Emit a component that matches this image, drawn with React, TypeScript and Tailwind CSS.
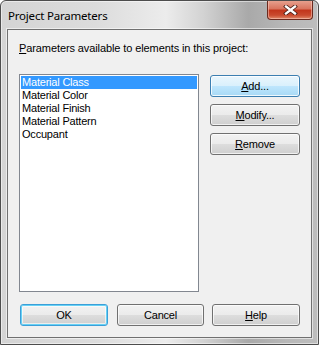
import React from "react";

const body = "font-['Liberation_Sans',Arial,sans-serif] text-[11px] tracking-[-0.2px] text-black";

function Btn({ children, w, variant = "normal" }: { children: React.ReactNode; w: string; variant?: "normal" | "hover" | "default" }) {
  const base = "h-[22px] flex items-center justify-center rounded-[3px] border " + body + " " + w;
  if (variant === "hover") {
    return (
      <div className={base + " border-[#3c7fb1] bg-[linear-gradient(to_bottom,#eaf6fd_0%,#d9f0fc_50%,#bee6fd_51%,#a7d9f5_100%)] shadow-[inset_0_0_0_1px_rgba(255,255,255,0.8)]"}>
        {children}
      </div>
    );
  }
  if (variant === "default") {
    return (
      <div className={base + " border-[#3c9fd8] bg-[linear-gradient(to_bottom,#f2f2f2_0%,#ebebeb_50%,#dddddd_51%,#cfcfcf_100%)] shadow-[inset_0_0_0_1px_#67d1f5,inset_0_0_0_2px_rgba(255,255,255,0.6)]"}>
        {children}
      </div>
    );
  }
  return (
    <div className={base + " border-[#707070] bg-[linear-gradient(to_bottom,#f2f2f2_0%,#ebebeb_50%,#dddddd_51%,#cfcfcf_100%)] shadow-[inset_0_0_0_1px_rgba(255,255,255,0.7)]"}>
      {children}
    </div>
  );
}

export default function App() {
  const items = ["Material Class", "Material Color", "Material Finish", "Material Pattern", "Occupant"];
  return (
    <div className="w-[319px] h-[345px] flex flex-col border border-[#4d4d4d] rounded-t-[6px] bg-[linear-gradient(to_right,#d4d4d4_0%,#dcdcdc_30%,#ececec_52%,#d2d2d2_64%,#a9a9a9_78%,#b8b8b8_90%,#bdbdbd_100%)] shadow-[inset_0_0_0_1px_rgba(255,255,255,0.5)] overflow-hidden">
      <div className="h-[28px] flex items-start justify-between pl-[7px] pr-[5px] shrink-0">
        <span className="mt-[8px] font-['Noto_Sans',sans-serif] text-[11.5px] tracking-[-0.2px] leading-[14px] text-black">Project Parameters</span>
        <div className="w-[46px] h-[20px] -mt-[1px] rounded-b-[4px] border border-[#6b2a1e] border-t-0 bg-[linear-gradient(to_bottom,#e8a593_0%,#d9755f_45%,#c2361c_55%,#c94a2e_80%,#e08a6a_100%)] shadow-[inset_0_0_0_1px_rgba(255,210,200,0.5)] flex items-center justify-center">
          <svg width="15" height="10" viewBox="0 0 15 10">
            <path d="M3 1.5 L12 8.5 M12 1.5 L3 8.5" stroke="#4a2018" strokeWidth="4" strokeLinecap="square" fill="none" />
            <path d="M3 1.5 L12 8.5 M12 1.5 L3 8.5" stroke="#ffffff" strokeWidth="2.3" strokeLinecap="square" fill="none" />
          </svg>
        </div>
      </div>
      <div className="mx-[6px] h-[309px] shrink-0 border border-[#707070] bg-[#f0f0f0] shadow-[0_0_0_1px_rgba(255,255,255,0.55)] flex flex-col pl-[11px] pt-[12px]">
        <div className={"font-['Liberation_Sans',Arial,sans-serif] text-[11px] tracking-[-0.1px] text-black h-[13px] leading-[13px]"}>
          <span className="underline">P</span>arameters available to elements in this project:
        </div>
        <div className="mt-[19px] flex items-start">
          <div className="w-[180px] h-[218px] border border-[#828790] bg-white p-[1px] shrink-0">
            {items.map((it, i) => (
              <div
                key={it}
                className={body + " h-[13px] leading-[13px] pl-[1px] " + (i === 0 ? "bg-[#3399ff] text-white" : "")}
              >
                {it}
              </div>
            ))}
          </div>
          <div className="ml-[11px] mt-[1px] flex flex-col gap-[7px]">
            <Btn w="w-[90px]" variant="hover">
              <span><span className="underline">A</span>dd...</span>
            </Btn>
            <Btn w="w-[90px]">
              <span><span className="underline">M</span>odify...</span>
            </Btn>
            <Btn w="w-[90px]">
              <span><span className="underline">R</span>emove</span>
            </Btn>
          </div>
        </div>
        <div className="mt-[12px] flex items-start">
          <div className="ml-[1px]">
            <Btn w="w-[88px]" variant="default">OK</Btn>
          </div>
          <div className="ml-[9px]">
            <Btn w="w-[87px]">Cancel</Btn>
          </div>
          <div className="ml-[8px]">
            <Btn w="w-[88px]">
              <span><span className="underline">H</span>elp</span>
            </Btn>
          </div>
        </div>
      </div>
    </div>
  );
}
